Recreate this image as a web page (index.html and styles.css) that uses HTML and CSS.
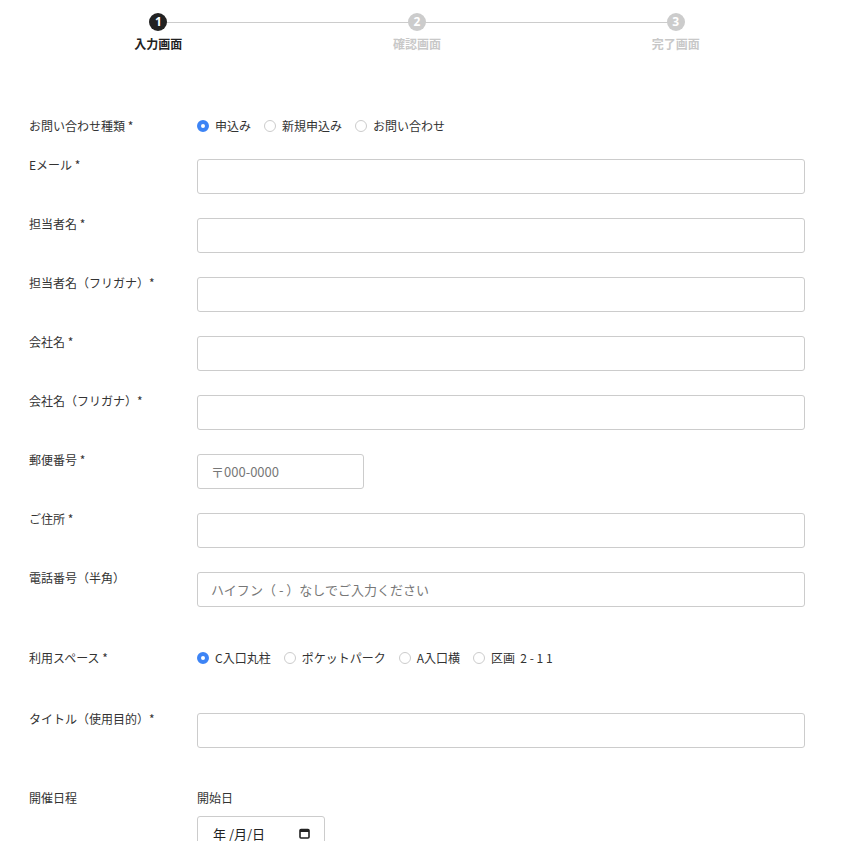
FILE: index.html
```html
<!DOCTYPE html>
<html lang="ja">

<head>
    <meta charset="UTF-8">
    <meta name="viewport" content="width=device-width, initial-scale=1.0">
    <title>お問い合わせ</title>
    <link rel="stylesheet" href="styles.css">
</head>

<body>

    <!-- Progress steps -->
    <div class="steps">
        <div class="step active">
            <span class="step-num">1</span>
            <span class="step-label">入力画面</span>
        </div>
        <div class="step">
            <span class="step-num">2</span>
            <span class="step-label">確認画面</span>
        </div>
        <div class="step">
            <span class="step-num">3</span>
            <span class="step-label">完了画面</span>
        </div>
    </div>

    <form class="form">
        <div class="row radio-row">
            <label class="label">お問い合わせ種類 *</label>
            <div class="radios">
                <label class="radio"><input type="radio" name="kind" checked>申込み</label>
                <label class="radio"><input type="radio" name="kind">新規申込み</label>
                <label class="radio"><input type="radio" name="kind">お問い合わせ</label>
            </div>
        </div>

        <div class="row">
            <label class="label">Eメール *</label>
            <input type="text" class="field">
        </div>

        <div class="row">
            <label class="label">担当者名 *</label>
            <input type="text" class="field">
        </div>

        <div class="row">
            <label class="label">担当者名（フリガナ）*</label>
            <input type="text" class="field">
        </div>

        <div class="row">
            <label class="label">会社名 *</label>
            <input type="text" class="field">
        </div>

        <div class="row">
            <label class="label">会社名（フリガナ）*</label>
            <input type="text" class="field">
        </div>

        <div class="row">
            <label class="label">郵便番号 *</label>
            <input type="text" class="field zip" placeholder="〒000-0000">
        </div>

        <div class="row">
            <label class="label">ご住所 *</label>
            <input type="text" class="field">
        </div>

        <div class="row">
            <label class="label">電話番号（半角）</label>
            <input type="text" class="field" placeholder="ハイフン（ - ）なしでご入力ください">
        </div>

        <div class="row radio-row space-row">
            <label class="label">利用スペース *</label>
            <div class="radios">
                <label class="radio"><input type="radio" name="space" checked>C入口丸柱</label>
                <label class="radio"><input type="radio" name="space">ポケットパーク</label>
                <label class="radio"><input type="radio" name="space">A入口横</label>
                <label class="radio"><input type="radio" name="space">区画&nbsp; 2 - 1 1</label>
            </div>
        </div>

        <div class="row">
            <label class="label">タイトル（使用目的）*</label>
            <input type="text" class="field">
        </div>

        <div class="row date-row">
            <label class="label">開催日程</label>
            <div class="date-group">
                <span class="sub-label">開始日</span>
                <!-- date box drawn by hand so the Japanese format shows -->
                <div class="field date">
                    <span>年 /月/日</span>
                    <svg width="11" height="11" viewBox="0 0 11 11">
                        <rect x="1" y="1.5" width="9" height="8.5" rx="1" fill="none" stroke="#222" stroke-width="1.6"/>
                        <rect x="1" y="1.5" width="9" height="2.5" fill="#222"/>
                    </svg>
                </div>
            </div>
        </div>
    </form>

</body>

</html>
```

FILE: styles.css
```css
body {
    margin: 0;
    padding: 13px 45px 0 29px;
    font-family: "Noto Sans CJK JP", "Noto Sans", sans-serif;
    font-size: 12px;
    color: #333;
    background: #fff;
}

/* Progress steps */
.steps {
    position: relative;
    display: grid;
    grid-template-columns: repeat(3, 1fr);
}

.steps::before {
    /* line joining the circles */
    content: "";
    position: absolute;
    top: 9px;
    left: calc(100% / 6);
    right: calc(100% / 6);
    height: 1px;
    background: #ccc;
}

.step {
    position: relative;
    display: flex;
    flex-direction: column;
    align-items: center;
}

.step-num {
    width: 18px;
    height: 18px;
    border-radius: 50%;
    background: #ccc;
    color: #fff;
    font-family: "Open Sans", sans-serif;
    font-weight: 700;
    font-size: 12px;
    line-height: 18px;
    text-align: center;
}

.step-label {
    margin-top: 5px;
    font-weight: 700;
    font-size: 12px;
    line-height: 16px;
    color: #c8c8c8;
}

.step.active .step-num {
    background: #222;
}

.step.active .step-label {
    color: #222;
}

/* Form */
.form {
    margin-top: 65px;
}

.row {
    display: grid;
    grid-template-columns: 168px 608px;
    margin-bottom: 24px;
}

.label {
    line-height: 18px;
    margin-top: -3px;
}

.radio-row .label {
    margin-top: 0;
}

.space-row {
    padding: 18px 0 22px;
}

.radios {
    display: flex;
    align-items: center;
    line-height: 18px;
}

.radio {
    display: flex;
    align-items: center;
    margin-right: 13px;
}

.radio input {
    appearance: none;
    width: 12px;
    height: 12px;
    margin: 0 6px 0 0;
    border: 1px solid #ccc;
    border-radius: 50%;
    background: #fff;
}

.radio input:checked {
    border: 4px solid #3d84f5;
}

.field {
    box-sizing: border-box;
    height: 35px;
    width: 100%;
    border: 1px solid #ccc;
    border-radius: 3px;
    padding: 0 13px;
    font-family: inherit;
    font-size: 13px;
    color: #333;
    background: #fff;
}

.field::placeholder {
    color: #777;
}

.zip {
    width: 167px;
}

.date-row {
    padding-top: 20px;
}

.date-group {
    display: flex;
    flex-direction: column;
    align-items: flex-start;
}

.sub-label {
    line-height: 18px;
    margin-top: -3px;
    margin-bottom: 9px;
}

.date {
    width: 128px;
    display: flex;
    align-items: center;
    justify-content: space-between;
    padding: 0 14px 0 15px;
    font-size: 13px;
    color: #222;
}
```
